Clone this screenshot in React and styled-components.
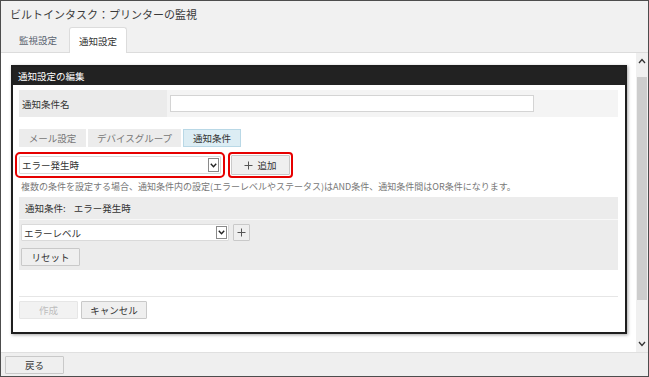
import React from "react";
import styled, { createGlobalStyle } from "styled-components";

const Global = createGlobalStyle`
  html, body { margin: 0; padding: 0; background: #fff; }
  body { font-family: "Noto Sans CJK JP", "Noto Sans", sans-serif; color: #333; }
  * { box-sizing: border-box; }
`;

const Frame = styled.div`
  width: 649px;
  height: 377px;
  border: 1px solid #4d4d4d;
  display: flex;
  flex-direction: column;
  background: #f1f1f1;
  overflow: hidden;
`;

const TitleBar = styled.div`
  height: 25px;
  padding-left: 9px;
  display: flex;
  align-items: center;
  font-size: 11px;
  color: #3a3a3a;
  background: #f1f1f1;
`;

const TabBar = styled.div`
  height: 27px;
  display: flex;
  align-items: flex-end;
  padding-left: 7px;
  gap: 1px;
  border-bottom: 1px solid #dcdcdc;
  background: #f1f1f1;
`;

const Tab = styled.div`
  height: ${(p) => (p.$active ? "26px" : "25px")};
  padding: 0 ${(p) => (p.$active ? "9px" : "10px")};
  display: flex;
  align-items: center;
  font-size: 9.5px;
  color: ${(p) => (p.$active ? "#333" : "#5a6470")};
  background: ${(p) => (p.$active ? "#fff" : "transparent")};
  border: 1px solid ${(p) => (p.$active ? "#dcdcdc" : "transparent")};
  border-bottom: none;
  border-radius: 3px 3px 0 0;
  margin-bottom: ${(p) => (p.$active ? "-1px" : "0")};
`;

const Main = styled.div`
  flex: 1;
  display: flex;
  min-height: 0;
  background: #fff;
`;

const ScrollArea = styled.div`
  flex: 1;
  padding: 12px 8px 0 10px;
  background: #fff;
`;

const Scrollbar = styled.div`
  width: 12px;
  display: flex;
  flex-direction: column;
  align-items: stretch;
  background: #f0f0f0;
`;

const ScrollArrow = styled.div`
  height: 16px;
  display: flex;
  align-items: center;
  justify-content: center;
`;

const ScrollThumb = styled.div`
  height: ${(p) => p.$h}px;
  margin: 8px 1px 0;
  background: #cdcdcd;
`;

const ScrollTrack = styled.div`
  flex: 1;
`;

const Dialog = styled.div`
  width: 616px;
  border: 2px solid #1e1e1e;
  box-shadow: 1px 1px 3px rgba(0, 0, 0, 0.35);
  background: #fff;
`;

const DialogHeader = styled.div`
  height: 18px;
  padding-left: 5px;
  display: flex;
  align-items: center;
  background: #222;
  color: #fff;
  font-size: 9.5px;
`;

const DialogBody = styled.div`
  padding: 5px 7px 13px 6px;
  display: flex;
  flex-direction: column;
`;

const FieldRow = styled.div`
  height: 27px;
  display: flex;
  background: #f4f4f4;
`;

const FieldLabel = styled.div`
  width: 148px;
  padding-left: 3px;
  display: flex;
  align-items: center;
  background: #ebebeb;
  font-size: 9.5px;
  color: #333;
`;

const FieldValue = styled.div`
  flex: 1;
  display: flex;
  align-items: center;
  padding-left: 3px;
`;

const TextInput = styled.input`
  width: 364px;
  height: 17px;
  border: 1px solid #d4d4d4;
  background: #fff;
  outline: none;
`;

const SubTabs = styled.div`
  margin-top: 12px;
  display: flex;
  gap: 2px;
`;

const SubTab = styled.div`
  height: 18px;
  width: ${(p) => p.$w}px;
  display: flex;
  align-items: center;
  justify-content: center;
  font-size: 9.5px;
  color: ${(p) => (p.$active ? "#333" : "#777")};
  background: ${(p) => (p.$active ? "#dcedf4" : "#ececec")};
  border: 1px solid ${(p) => (p.$active ? "#b9d8e6" : "#ececec")};
`;

const ConditionRow = styled.div`
  margin-top: 8px;
  height: 20px;
  display: flex;
  align-items: center;
  gap: 10px;
`;

const SelectWrap = styled.div`
  width: ${(p) => p.$w}px;
  height: ${(p) => p.$h || 18}px;
  display: flex;
  align-items: stretch;
  background: #fff;
  border: 1px solid #dadada;
  outline: ${(p) => (p.$mark ? "2px solid #e60000" : "none")};
  outline-offset: 2px;
  border-radius: 1px;
`;

const Select = styled.select`
  flex: 1;
  appearance: none;
  -webkit-appearance: none;
  border: none;
  background: transparent;
  padding: 0 0 0 2px;
  font-family: inherit;
  font-size: 9.5px;
  color: #333;
  outline: none;
`;

const ArrowBox = styled.div`
  width: 11px;
  margin: 1px 1px 1px 0;
  border: 1px solid #8a8a8a;
  display: flex;
  align-items: center;
  justify-content: center;
  background: #fff;
`;

const Button = styled.button`
  height: ${(p) => p.$h || 18}px;
  width: ${(p) => p.$w}px;
  padding: 0;
  display: inline-flex;
  align-items: center;
  justify-content: center;
  gap: 4px;
  font-family: inherit;
  font-size: 9.5px;
  color: ${(p) => (p.disabled ? "#bdbdbd" : "#333")};
  background: ${(p) => (p.disabled ? "#f2f2f2" : "#efefef")};
  border: 1px solid ${(p) => (p.disabled ? "#e6e6e6" : "#c9c9c9")};
  border-radius: 1px;
  outline: ${(p) => (p.$mark ? "2px solid #e60000" : "none")};
  outline-offset: 1px;
  cursor: pointer;
`;

const Note = styled.div`
  margin-top: 5px;
  padding-left: 2px;
  height: 12px;
  display: flex;
  align-items: center;
  font-size: 9px;
  color: #777;
  white-space: nowrap;
`;

const Panel = styled.div`
  margin-top: 5px;
  background: #ececec;
  display: flex;
  flex-direction: column;
`;

const PanelHeader = styled.div`
  height: 23px;
  padding-left: 6px;
  display: flex;
  align-items: center;
  font-size: 9.5px;
  color: #333;
  border-bottom: 1px solid #f8f8f8;
  gap: 8px;
`;

const PanelBody = styled.div`
  padding: 4px 2px 4px 2px;
  display: flex;
  flex-direction: column;
  gap: 7px;
`;

const InlineRow = styled.div`
  display: flex;
  align-items: center;
  gap: 4px;
`;

const DialogFooter = styled.div`
  margin-top: 26px;
  border-top: 1px solid #e6e6e6;
  padding-top: 4px;
  display: flex;
  gap: 3px;
`;

const BottomBar = styled.div`
  height: 24px;
  border-top: 1px solid #e0e0e0;
  background: #efefef;
  display: flex;
  align-items: center;
  padding-left: 4px;
`;

const Chevron = ({ up }) => (
  <svg width="8" height="6" viewBox="0 0 8 6">
    <path
      d={up ? "M1 5 L4 1.5 L7 5" : "M1 1 L4 4.5 L7 1"}
      fill="none"
      stroke="#333"
      strokeWidth="1.3"
    />
  </svg>
);

const SmallChevron = () => (
  <svg width="7" height="5" viewBox="0 0 7 5">
    <path d="M0.8 0.8 L3.5 3.8 L6.2 0.8" fill="none" stroke="#222" strokeWidth="1.4" />
  </svg>
);

const Plus = () => (
  <svg width="9" height="9" viewBox="0 0 9 9">
    <path d="M4.5 0.5 V8.5 M0.5 4.5 H8.5" stroke="#555" strokeWidth="1" />
  </svg>
);

export default function App() {
  return (
    <>
      <Global />
      <Frame>
        <TitleBar>ビルトインタスク：プリンターの監視</TitleBar>
        <TabBar>
          <Tab>監視設定</Tab>
          <Tab $active>通知設定</Tab>
        </TabBar>
        <Main>
          <ScrollArea>
            <Dialog>
              <DialogHeader>通知設定の編集</DialogHeader>
              <DialogBody>
                <FieldRow>
                  <FieldLabel>通知条件名</FieldLabel>
                  <FieldValue>
                    <TextInput type="text" />
                  </FieldValue>
                </FieldRow>
                <SubTabs>
                  <SubTab $w={67}>メール設定</SubTab>
                  <SubTab $w={93}>デバイスグループ</SubTab>
                  <SubTab $w={58} $active>通知条件</SubTab>
                </SubTabs>
                <ConditionRow>
                  <SelectWrap $w={202} $mark>
                    <Select defaultValue="error">
                      <option value="error">エラー発生時</option>
                    </Select>
                    <ArrowBox>
                      <SmallChevron />
                    </ArrowBox>
                  </SelectWrap>
                  <Button $w={59} $h={20} $mark>
                    <Plus />
                    追加
                  </Button>
                </ConditionRow>
                <Note>
                  複数の条件を設定する場合、通知条件内の設定(エラーレベルやステータス)はAND条件、通知条件間はOR条件になります。
                </Note>
                <Panel>
                  <PanelHeader>
                    <span>通知条件:</span>
                    <span>エラー発生時</span>
                  </PanelHeader>
                  <PanelBody>
                    <InlineRow>
                      <SelectWrap $w={208} $h={17}>
                        <Select defaultValue="level">
                          <option value="level">エラーレベル</option>
                        </Select>
                        <ArrowBox>
                          <SmallChevron />
                        </ArrowBox>
                      </SelectWrap>
                      <Button $w={17} $h={17}>
                        <Plus />
                      </Button>
                    </InlineRow>
                    <InlineRow>
                      <Button $w={59} $h={18}>リセット</Button>
                    </InlineRow>
                  </PanelBody>
                </Panel>
                <DialogFooter>
                  <Button $w={59} disabled>作成</Button>
                  <Button $w={66}>キャンセル</Button>
                </DialogFooter>
              </DialogBody>
            </Dialog>
          </ScrollArea>
          <Scrollbar>
            <ScrollArrow>
              <Chevron up />
            </ScrollArrow>
            <ScrollThumb $h={223} />
            <ScrollTrack />
            <ScrollArrow>
              <Chevron />
            </ScrollArrow>
          </Scrollbar>
        </Main>
        <BottomBar>
          <Button $w={59} $h={18}>戻る</Button>
        </BottomBar>
      </Frame>
    </>
  );
}
